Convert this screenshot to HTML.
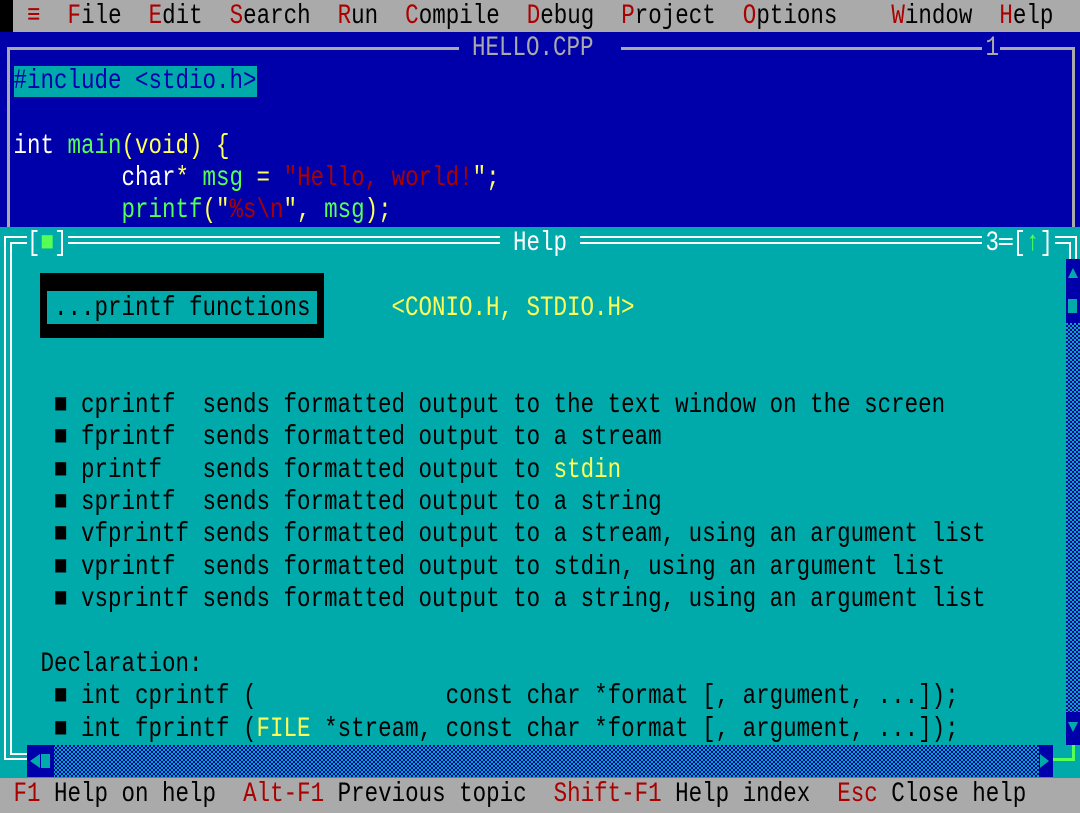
<!DOCTYPE html>
<html><head><meta charset="utf-8"><style>
*{margin:0;padding:0;box-sizing:border-box}
body{width:1080px;height:810px;overflow:hidden;background:#aaaaaa;position:relative;font-family:"Liberation Mono","DejaVu Sans Mono",monospace;font-size:22.5px}
.r{position:absolute;height:32.4px;line-height:32.4px;white-space:pre;transform:scaleY(1.22);transform-origin:50% 55%}
.a{position:absolute}
.w{color:#fff}.g{color:#55ff55}.y{color:#ffff55}.rd{color:#aa0000}.k{color:#000}.b{color:#0000aa}
.chk{background:repeating-conic-gradient(#0000aa 0 25%,#00aaaa 0 50%) 0 0/4px 4px}
</style></head><body>
<!-- menu -->
<div class="a" style="left:0;top:0;width:1080px;height:32.4px;background:#aaaaaa"></div>
<div class="a" style="left:0;top:0;width:13px;height:32.4px;background:#000"></div>
<div class="r k" style="left:13.5px;top:0"> <span class="rd">≡</span>  <span class="rd">F</span>ile  <span class="rd">E</span>dit  <span class="rd">S</span>earch  <span class="rd">R</span>un  <span class="rd">C</span>ompile  <span class="rd">D</span>ebug  <span class="rd">P</span>roject  <span class="rd">O</span>ptions    <span class="rd">W</span>indow  <span class="rd">H</span>elp</div>
<!-- editor -->
<div class="a" style="left:0;top:32.4px;width:1080px;height:194.4px;background:#0000aa"></div>
<div class="a" style="left:7px;top:47px;width:1068px;height:3px;background:#aaaaaa"></div>
<div class="a" style="left:7px;top:47px;width:3px;height:180px;background:#aaaaaa"></div>
<div class="a" style="left:1072px;top:47px;width:3px;height:180px;background:#aaaaaa"></div>
<div class="a" style="left:459px;top:36px;width:162px;height:26px;background:#0000aa"></div>
<div class="r" style="left:472px;top:32.4px;color:#aaaaaa">HELLO.CPP</div>
<div class="a" style="left:982px;top:36px;width:18px;height:26px;background:#0000aa"></div>
<div class="r" style="left:985.5px;top:32.4px;color:#aaaaaa">1</div>
<div class="a" style="left:13.5px;top:66px;width:243px;height:31px;background:#00aaaa"></div>
<div class="r b" style="left:13.5px;top:64.8px">#include &lt;stdio.h&gt;</div>
<div class="r" style="left:13.5px;top:129.6px"><span class="w">int </span><span class="g">main</span><span class="y">(void) {</span></div>
<div class="r" style="left:121.5px;top:162px"><span class="w">char</span><span class="y">* </span><span class="g">msg</span><span class="y"> = </span><span class="rd">"Hello, world!</span><span class="y">";</span></div>
<div class="r" style="left:121.5px;top:194.4px"><span class="g">printf</span><span class="y">("</span><span class="rd">%s\n</span><span class="y">", </span><span class="g">msg</span><span class="y">);</span></div>
<!-- help window -->
<div class="a" style="left:0;top:226.8px;width:1080px;height:550.8px;background:#00aaaa"></div>
<div class="a" style="left:4px;top:236px;width:1073px;height:2px;background:#fff"></div>
<div class="a" style="left:10px;top:242px;width:1061px;height:2px;background:#fff"></div>
<div class="a" style="left:4px;top:236px;width:2px;height:524px;background:#fff"></div>
<div class="a" style="left:10px;top:242px;width:2px;height:513px;background:#fff"></div>
<div class="a" style="left:4px;top:758px;width:24px;height:2px;background:#fff"></div>
<div class="a" style="left:10px;top:753px;width:18px;height:2px;background:#fff"></div>
<div class="a" style="left:1075px;top:236px;width:2px;height:24px;background:#fff"></div>
<div class="a" style="left:1069px;top:242px;width:2px;height:18px;background:#fff"></div>
<div class="a" style="left:27px;top:230px;width:40.5px;height:26px;background:#00aaaa"></div>
<div class="r w" style="left:27px;top:226.8px">[<span class="g">■</span>]</div>
<div class="a" style="left:500px;top:230px;width:80px;height:26px;background:#00aaaa"></div>
<div class="r w" style="left:513px;top:226.8px">Help</div>
<div class="a" style="left:982px;top:230px;width:73px;height:26px;background:#00aaaa"></div>
<div class="r w" style="left:985.5px;top:226.8px">3═[<span class="g">↑</span>]</div>
<!-- box -->
<div class="a" style="left:40px;top:273px;width:284px;height:65px;background:#000"></div>
<div class="a" style="left:47px;top:291px;width:270px;height:33px;background:#00aaaa"></div>
<div class="r k" style="left:54px;top:291.6px">...printf functions</div>
<div class="r y" style="left:391.5px;top:291.6px">&lt;CONIO.H, STDIO.H&gt;</div>
<div class="r k" style="left:54px;top:388.8px">■ cprintf  sends formatted output to the text window on the screen</div>
<div class="r k" style="left:54px;top:421.2px">■ fprintf  sends formatted output to a stream</div>
<div class="r k" style="left:54px;top:453.6px">■ printf   sends formatted output to <span class="y">stdin</span></div>
<div class="r k" style="left:54px;top:486px">■ sprintf  sends formatted output to a string</div>
<div class="r k" style="left:54px;top:518.4px">■ vfprintf sends formatted output to a stream, using an argument list</div>
<div class="r k" style="left:54px;top:550.8px">■ vprintf  sends formatted output to stdin, using an argument list</div>
<div class="r k" style="left:54px;top:583.2px">■ vsprintf sends formatted output to a string, using an argument list</div>
<div class="r k" style="left:40.5px;top:648px">Declaration:</div>
<div class="r k" style="left:54px;top:680.4px">■ int cprintf (              const char *format [, argument, ...]);</div>
<div class="r k" style="left:54px;top:712.8px">■ int fprintf (<span class="y">FILE</span> *stream, const char *format [, argument, ...]);</div>
<!-- vertical scrollbar -->
<div class="a chk" style="left:1066px;top:259px;width:14px;height:486px"></div>
<div class="a" style="left:1066px;top:259px;width:14px;height:64px;background:#0000aa"></div>
<div class="a" style="left:1068px;top:268px;width:0;height:0;border-left:5px solid transparent;border-right:5px solid transparent;border-bottom:10px solid #00aaaa"></div>
<div class="a" style="left:1068px;top:299px;width:9px;height:14px;background:#00aaaa"></div>
<div class="a" style="left:1066px;top:712px;width:14px;height:33px;background:#0000aa"></div>
<div class="a" style="left:1068px;top:722px;width:0;height:0;border-left:5px solid transparent;border-right:5px solid transparent;border-top:10px solid #00aaaa"></div>
<!-- horizontal scrollbar -->
<div class="a chk" style="left:27px;top:745px;width:1026px;height:32px"></div>
<div class="a" style="left:27px;top:745px;width:27px;height:32px;background:#0000aa"></div>
<div class="a" style="left:30px;top:754px;width:0;height:0;border-top:7px solid transparent;border-bottom:7px solid transparent;border-right:10px solid #00aaaa"></div>
<div class="a" style="left:41px;top:754px;width:9px;height:14px;background:#00aaaa"></div>
<div class="a" style="left:1039px;top:745px;width:14px;height:32px;background:#0000aa"></div>
<div class="a" style="left:1040px;top:754px;width:0;height:0;border-top:7px solid transparent;border-bottom:7px solid transparent;border-left:9px solid #00aaaa"></div>
<div class="a" style="left:1053px;top:758px;width:22px;height:3px;background:#55ff55"></div>
<div class="a" style="left:1072px;top:745px;width:3px;height:16px;background:#55ff55"></div>
<!-- status -->
<div class="a" style="left:0;top:777.6px;width:1080px;height:32.4px;background:#aaaaaa"></div>
<div class="r k" style="left:0;top:777.6px"> <span class="rd">F1</span> Help on help  <span class="rd">Alt-F1</span> Previous topic  <span class="rd">Shift-F1</span> Help index  <span class="rd">Esc</span> Close help</div>
</body></html>
